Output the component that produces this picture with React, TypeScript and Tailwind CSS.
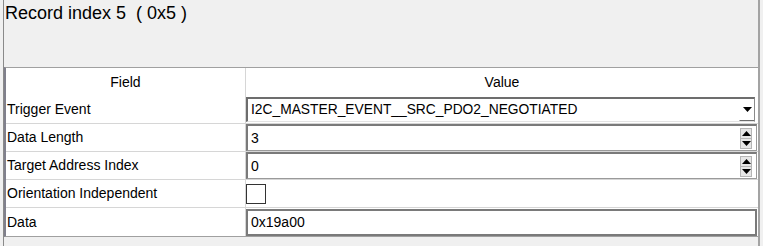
import React from 'react';

function Down({ className = '' }: { className?: string }) {
  return (
    <svg width="9" height="5" viewBox="0 0 9 5" className={className}>
      <path d="M0 0 H9 L4.5 5 Z" fill="#000" />
    </svg>
  );
}

function Up({ className = '' }: { className?: string }) {
  return (
    <svg width="9" height="5" viewBox="0 0 9 5" className={className}>
      <path d="M0 5 H9 L4.5 0 Z" fill="#000" />
    </svg>
  );
}

function Combo({ value }: { value: string }) {
  return (
    <div className="flex h-[25px] w-[509px] items-center border-t-2 border-l-2 border-r border-b border-t-[#6d6d6d] border-l-[#6d6d6d] border-r-[#8a8a8a] border-b-[#e3e3e3] bg-white">
      <span className="flex-1 pl-[3px] pt-[1px] text-[13.8px]">{value}</span>
      <div className="flex h-full w-[15px] items-center justify-center border-b border-l border-[#6d6d6d] border-l-white">
        <Down />
      </div>
    </div>
  );
}

function Spin({ value }: { value: string }) {
  return (
    <div className="flex h-[27px] w-[511px] items-center border-t-2 border-l-2 border-r border-b border-t-[#7a7a7a] border-l-[#7a7a7a] border-r-[#9a9a9a] border-b-[#9a9a9a] bg-white">
      <span className="flex-1 pl-[3px] pt-[1px]">{value}</span>
      <div className="mr-[4px] flex h-[21px] w-[12px] flex-col">
        <div className="flex flex-1 items-center justify-center border border-[#b5b5b5] bg-[#e6e6e6]">
          <Up />
        </div>
        <div className="flex flex-1 items-center justify-center border border-t-0 border-[#b5b5b5] bg-[#e6e6e6]">
          <Down />
        </div>
      </div>
    </div>
  );
}

function Row({ label, children, last }: { label: string; children: React.ReactNode; last?: boolean }) {
  return (
    <div className={`flex h-[28px] ${last ? '' : 'border-b border-[#d6d6d6]'}`}>
      <div className="flex w-[240px] items-center border-r border-[#d6d6d6] pl-[1px]">{label}</div>
      <div className="flex flex-1 items-center">{children}</div>
    </div>
  );
}

export default function App() {
  return (
    <div className="h-[246px] w-[763px] bg-[#f0f0f0] pl-[3px] font-['Liberation_Sans',Arial,sans-serif] text-[14px] text-black">
      <div className="flex h-full w-[757px] flex-col border-l border-r-2 border-l-[#8a8a8a] border-r-[#a3a3a3]">
        <div className="h-[67px] pl-px pt-[3px] text-[18px] leading-[21px]">Record index 5&nbsp;&nbsp;( 0x5 )</div>
        <div className="border-t border-l-2 border-b border-[#a0a0a0] border-l-[#80808c] bg-white">
          <div className="flex h-[28px]">
            <div className="flex w-[240px] items-center justify-center border-r border-[#d6d6d6]">Field</div>
            <div className="flex flex-1 items-center justify-center">Value</div>
          </div>
          <Row label="Trigger Event">
            <Combo value="I2C_MASTER_EVENT__SRC_PDO2_NEGOTIATED" />
          </Row>
          <Row label="Data Length">
            <Spin value="3" />
          </Row>
          <Row label="Target Address Index">
            <Spin value="0" />
          </Row>
          <Row label="Orientation Independent">
            <div className="h-[20px] w-[20px] border border-[#333] bg-white" />
          </Row>
          <Row label="Data" last>
            <div className="flex h-[27px] w-[511px] items-center border-2 border-[#7a7a7a] bg-white pl-[3px] pt-[1px]">0x19a00</div>
          </Row>
        </div>
      </div>
    </div>
  );
}
